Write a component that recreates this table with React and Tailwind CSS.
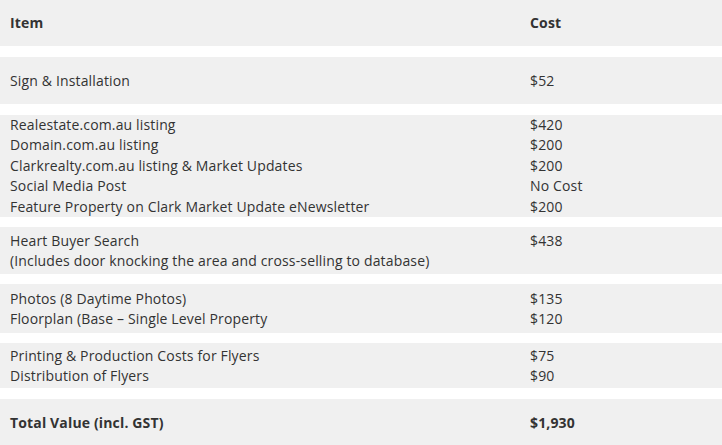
import React from "react";

const groups = [
  { h: "h-[47px]", pt: "pt-[14px]", mt: "mt-[11px]", rows: [["Sign & Installation", "$52"]] },
  {
    h: "h-[102px]",
    pt: "pt-0",
    mt: "mt-[11px]",
    rows: [
      ["Realestate.com.au listing", "$420"],
      ["Domain.com.au listing", "$200"],
      ["Clarkrealty.com.au listing & Market Updates", "$200"],
      ["Social Media Post", "No Cost"],
      ["Feature Property on Clark Market Update eNewsletter", "$200"],
    ],
  },
  {
    h: "h-[47px]",
    pt: "pt-[4px]",
    mt: "mt-[10px]",
    rows: [
      ["Heart Buyer Search", "$438"],
      ["(Includes door knocking the area and cross-selling to database)", ""],
    ],
  },
  {
    h: "h-[49px]",
    pt: "pt-[5px]",
    mt: "mt-[10px]",
    rows: [
      ["Photos (8 Daytime Photos)", "$135"],
      ["Floorplan (Base – Single Level Property", "$120"],
    ],
  },
  {
    h: "h-[45px]",
    pt: "pt-[3px]",
    mt: "mt-[10px]",
    rows: [
      ["Printing & Production Costs for Flyers", "$75"],
      ["Distribution of Flyers", "$90"],
    ],
  },
];

export default function App() {
  return (
    <div className="w-[722px] h-[445px] overflow-hidden bg-white text-[14px] text-[#333] tracking-[0.15px] font-['Open_Sans',sans-serif]">
      <div className="h-[46px] bg-[#f0f0f0] flex items-center font-bold leading-5">
        <div className="w-[520px] pl-[10px]">Item</div>
        <div className="pl-[10px]">Cost</div>
      </div>

      {groups.map((g, i) => (
        <div key={i} className={`${g.h} ${g.pt} ${g.mt} bg-[#f0f0f0] leading-[20.4px]`}>
          {g.rows.map(([item, cost], j) => (
            <div key={j} className="flex">
              <div className="w-[520px] pl-[10px] whitespace-nowrap">{item}</div>
              <div className="pl-[10px]">{cost}</div>
            </div>
          ))}
        </div>
      ))}

      <div className="mt-[11px] h-[47px] bg-[#f0f0f0] flex items-center font-bold leading-5">
        <div className="w-[520px] pl-[10px]">Total Value (incl. GST)</div>
        <div className="pl-[10px]">$1,930</div>
      </div>
    </div>
  );
}
